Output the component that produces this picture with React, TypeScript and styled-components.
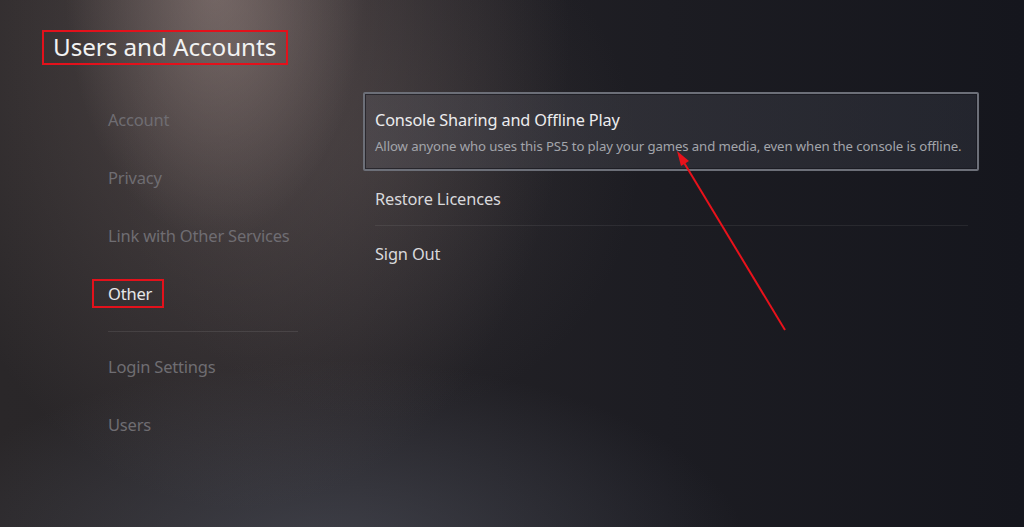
import React from "react";
import styled, { createGlobalStyle } from "styled-components";

const Global = createGlobalStyle`
  html, body { margin: 0; padding: 0; background: #1c1b20; }
  body { font-family: "Noto Sans", "Open Sans", sans-serif; }
`;

const Page = styled.div`
  position: relative;
  width: 1024px;
  height: 527px;
  overflow: hidden;
  box-sizing: border-box;
  padding: 30px 0 0 42px;
  background:
    radial-gradient(ellipse 150px 260px at 215px -20px, rgba(170, 150, 145, 0.45), rgba(170, 150, 145, 0) 100%),
    radial-gradient(ellipse 330px 470px at 240px 40px, rgba(130, 112, 108, 0.42), rgba(130, 112, 108, 0) 100%),
    radial-gradient(ellipse 260px 260px at 380px 160px, rgba(110, 100, 100, 0.18), rgba(110, 100, 100, 0) 100%),
    radial-gradient(ellipse 420px 200px at 330px 560px, rgba(95, 100, 115, 0.45), rgba(95, 100, 115, 0) 100%),
    linear-gradient(90deg, #2a2729 0%, #252327 35%, #1c1c22 65%, #15161d 100%);
`;

const TitleBox = styled.h1`
  display: inline-block;
  margin: 0;
  padding: 0 10px 0 9px;
  height: 35px;
  box-sizing: border-box;
  border: 2px solid #e3111b;
  font-family: "Noto Sans", sans-serif;
  font-weight: 400;
  font-size: 24.3px;
  line-height: 30px;
  color: #f2f2f2;
  letter-spacing: -0.1px;
`;

const Body = styled.div`
  display: grid;
  grid-template-columns: 321px 616px;
  margin-top: 27px;
`;

const Nav = styled.nav`
  display: flex;
  flex-direction: column;
  padding-left: 50px;
  margin-top: -2px;
`;

const NavItem = styled.div`
  height: 58px;
  display: flex;
  align-items: center;
`;

const NavLabel = styled.span<{ $active?: boolean }>`
  display: inline-flex;
  align-items: center;
  box-sizing: border-box;
  height: 29px;
  padding: 0 10px 0 14px;
  border: 2px solid ${(p) => (p.$active ? "#e3111b" : "transparent")};
  font-size: 16.5px;
  color: ${(p) => (p.$active ? "#e6e6e8" : "#6f6d72")};
  letter-spacing: -0.2px;
`;

const NavDivider = styled.div`
  margin: 9px 0 5px 16px;
  width: 190px;
  height: 1px;
  background: rgba(255, 255, 255, 0.09);
`;

const Panel = styled.div`
  display: flex;
  flex-direction: column;
`;

const Card = styled.div`
  height: 79px;
  box-sizing: border-box;
  border: 2px solid #6c6f78;
  border-radius: 2px;
  box-shadow: inset 0 0 0 1px rgba(20, 20, 26, 0.6);
  background: linear-gradient(90deg, rgba(90, 88, 96, 0.35), rgba(60, 64, 76, 0.35));
  padding: 15px 10px 0 10px;
  display: flex;
  flex-direction: column;
`;

const CardTitle = styled.div`
  font-size: 16.3px;
  line-height: 22px;
  color: #ececee;
  letter-spacing: -0.15px;
`;

const CardSub = styled.div`
  margin-top: 6px;
  font-size: 13.2px;
  line-height: 18px;
  color: #a3a5ab;
  letter-spacing: -0.1px;
  white-space: nowrap;
`;

const Row = styled.div<{ $divider?: boolean }>`
  margin: 0 11px 0 12px;
  height: 54px;
  display: flex;
  align-items: center;
  border-bottom: 1px solid ${(p) => (p.$divider ? "rgba(255,255,255,0.07)" : "transparent")};
  font-size: 16.4px;
  color: #d9d9dc;
  letter-spacing: -0.15px;
`;

const ArrowLayer = styled.svg`
  position: absolute;
  left: 0;
  top: 0;
  width: 1024px;
  height: 527px;
  pointer-events: none;
`;

const navItems = ["Account", "Privacy", "Link with Other Services", "Other"];

export default function App() {
  return (
    <>
      <Global />
      <Page>
        <TitleBox>Users and Accounts</TitleBox>
        <Body>
          <Nav>
            {navItems.map((n) => (
              <NavItem key={n}>
                <NavLabel $active={n === "Other"}>{n}</NavLabel>
              </NavItem>
            ))}
            <NavDivider />
            <NavItem>
              <NavLabel>Login Settings</NavLabel>
            </NavItem>
            <NavItem>
              <NavLabel>Users</NavLabel>
            </NavItem>
          </Nav>
          <Panel>
            <Card>
              <CardTitle>Console Sharing and Offline Play</CardTitle>
              <CardSub>
                Allow anyone who uses this PS5 to play your games and media, even when the console is offline.
              </CardSub>
            </Card>
            <Row $divider>Restore Licences</Row>
            <Row>Sign Out</Row>
          </Panel>
        </Body>
        <ArrowLayer viewBox="0 0 1024 527">
          <line x1="785" y1="330" x2="683" y2="161" stroke="#e8121b" strokeWidth="2" />
          <polygon points="677,151 681,166 689,161" fill="#e8121b" />
        </ArrowLayer>
      </Page>
    </>
  );
}
